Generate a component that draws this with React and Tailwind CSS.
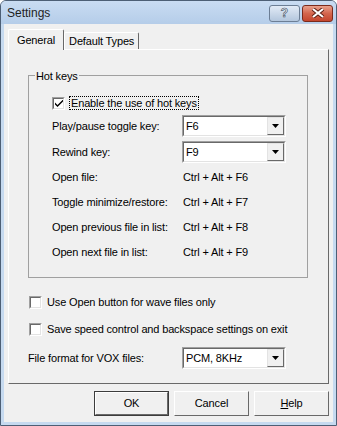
import React from 'react';

const Check = ({ checked }) => (
  <div className="w-[13px] h-[13px] shrink-0 border border-t-[#a0a0a0] border-l-[#a0a0a0] border-r-white border-b-white">
    <div className="w-full h-full bg-white border border-t-[#696969] border-l-[#696969] border-r-[#e3e3e3] border-b-[#e3e3e3] flex items-center justify-center">
      {checked && (
        <svg width="8" height="7" viewBox="0 0 8 7">
          <path d="M0 2.5 L0 4.5 L2.5 7 L8 1.5 L8 -0.5 L2.5 5 Z" fill="#000" />
        </svg>
      )}
    </div>
  </div>
);

const Combo = ({ value }) => (
  <div className="w-[104px] h-[22px] border border-t-[#a0a0a0] border-l-[#a0a0a0] border-r-white border-b-white">
    <div className="w-full h-full bg-white border border-t-[#696969] border-l-[#696969] border-r-[#e3e3e3] border-b-[#e3e3e3] flex items-center justify-between">
      <span className="pl-[2px]">{value}</span>
      <div className="w-[17px] h-[18px] bg-[#f0f0f0] border border-t-[#e3e3e3] border-l-[#e3e3e3] border-r-[#696969] border-b-[#696969] flex items-center justify-center">
        <svg width="7" height="4" viewBox="0 0 7 4">
          <path d="M0 0 H7 L3.5 4 Z" fill="#000" />
        </svg>
      </div>
    </div>
  </div>
);

const Button = ({ children, primary }) => (
  <div
    className={`w-[75px] h-[25px] ${primary ? 'border border-[#3c3c3c]' : ''}`}
  >
    <div className="w-full h-full bg-[#f0f0f0] border border-t-white border-l-white border-r-[#696969] border-b-[#696969] flex items-center justify-center">
      {children}
    </div>
  </div>
);

const hotkeys = [
  ['Open file:', 'Ctrl + Alt + F6'],
  ['Toggle minimize/restore:', 'Ctrl + Alt + F7'],
  ['Open previous file in list:', 'Ctrl + Alt + F8'],
  ['Open next file in list:', 'Ctrl + Alt + F9'],
];

export default function App() {
  return (
    <div className="w-[337px] h-[426px] bg-[#c6daf0] border border-[#4d5f75] rounded-t-[6px] flex flex-col overflow-hidden font-['Liberation_Sans',sans-serif] text-[11px] text-black tracking-[-0.15px]">
      {/* title bar */}
      <div className="h-[23px] shrink-0 flex items-center justify-between pl-[6px] pr-[3px] bg-gradient-to-b from-[#c9dcf2] to-[#b5cde9]">
        <span className="text-[12px] tracking-normal text-[#1e1e1e]">Settings</span>
        <div className="flex gap-[2px] pt-[1px]">
          <div className="w-[31px] h-[17px] rounded-[3px] border border-[#6c7e95] bg-gradient-to-b from-[#e2ebf6] to-[#b3c6dd] flex items-center justify-center">
            <span className="text-[12px] font-bold text-[#f4f7fb] tracking-normal leading-none [-webkit-text-stroke:0.6px_#3a4a60]">?</span>
          </div>
          <div className="w-[31px] h-[17px] rounded-[3px] border border-[#7a2a1c] bg-gradient-to-b from-[#e8a08c] via-[#d3654d] to-[#c4452d] flex items-center justify-center">
            <svg width="14" height="10" viewBox="0 0 14 10">
              <path d="M2 1 L12 9 M12 1 L2 9" stroke="#5a1f14" strokeWidth="4" />
              <path d="M2 1 L12 9 M12 1 L2 9" stroke="#fff" strokeWidth="2.2" />
            </svg>
          </div>
        </div>
      </div>

      {/* client area */}
      <div className="flex-1 mx-[3px] mb-[3px] bg-[#f0f0f0] flex flex-col px-[4px] pt-[5px]">
        {/* tabs */}
        <div className="flex items-end h-[20px]">
          <div className="relative z-10 -mb-px h-[21px] px-[8px] bg-[#f0f0f0] border-t border-l border-r border-t-white border-l-white border-r-[#696969] rounded-t-[2px] flex items-center">
            General
          </div>
          <div className="h-[17px] px-[4px] border-t border-l border-r border-t-white border-l-white border-r-[#696969] rounded-t-[2px] flex items-center">
            Default Types
          </div>
        </div>

        {/* tab panel */}
        <div className="h-[335px] border border-t-white border-l-white border-r-[#696969] border-b-[#696969] pl-[19px] pt-[25px]">
          <div className="relative w-[280px] h-[203px] border border-[#a0a0a0] pl-[23px] pt-[20px]">
            <span className="absolute -top-[8px] left-[6px] bg-[#f0f0f0] px-[1px]">Hot keys</span>
            <div className="flex items-center h-[14px]">
              <Check checked />
              <span className="ml-[4px] border border-dotted border-black px-[1px] leading-[12px]">
                Enable the use of hot keys
              </span>
            </div>
            <div className="flex items-center mt-[5px]">
              <span className="w-[130px]">Play/pause toggle key:</span>
              <Combo value="F6" />
            </div>
            <div className="flex items-center mt-[4px]">
              <span className="w-[130px]">Rewind key:</span>
              <Combo value="F9" />
            </div>
            <div className="mt-[2px]">
              {hotkeys.map(([label, value]) => (
                <div key={label} className="flex items-center h-[25px]">
                  <span className="w-[131px]">{label}</span>
                  <span>{value}</span>
                </div>
              ))}
            </div>
          </div>

          <div className="flex items-center h-[13px] mt-[18px] ml-px">
            <Check />
            <span className="ml-[5px]">Use Open button for wave files only</span>
          </div>
          <div className="flex items-center h-[13px] mt-[14px] ml-px">
            <Check />
            <span className="ml-[5px]">Save speed control and backspace settings on exit</span>
          </div>
          <div className="flex items-center mt-[11px]">
            <span className="w-[154px]">File format for VOX files:</span>
            <Combo value="PCM, 8KHz" />
          </div>
        </div>

        {/* buttons */}
        <div className="flex justify-end gap-[5px] mt-[7px]">
          <Button primary>OK</Button>
          <Button>Cancel</Button>
          <Button>
            <span>
              <span className="underline">H</span>elp
            </span>
          </Button>
        </div>
      </div>
    </div>
  );
}
